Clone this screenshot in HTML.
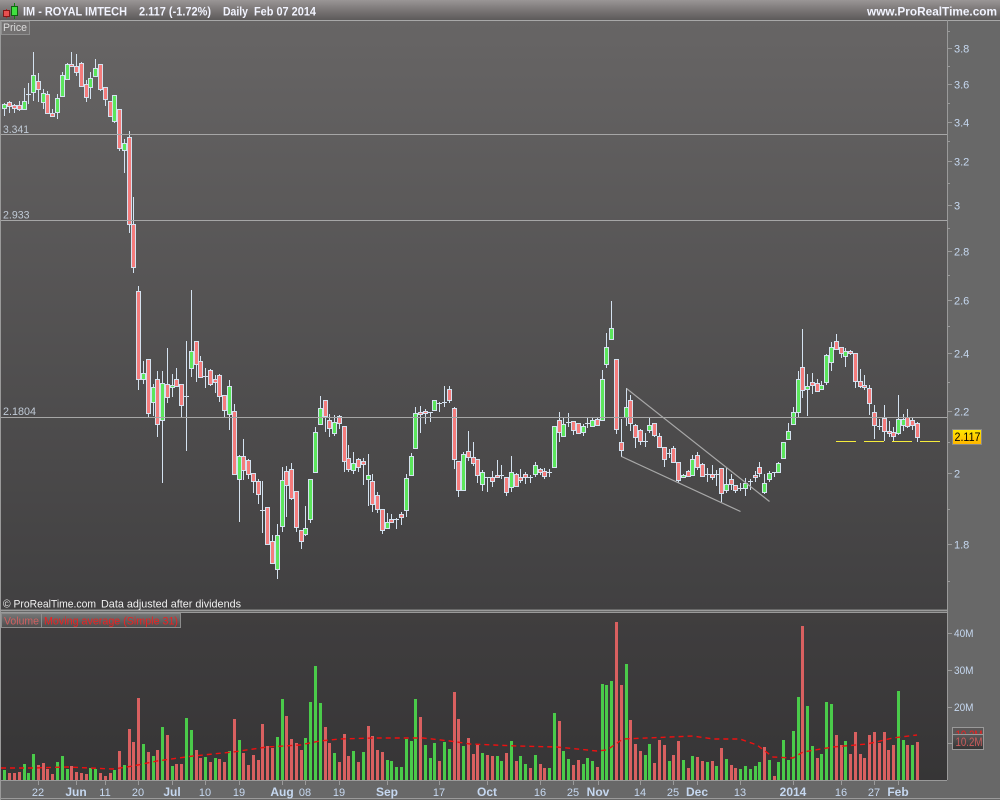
<!DOCTYPE html>
<html><head><meta charset="utf-8"><title>IM - ROYAL IMTECH</title>
<style>
html,body{margin:0;padding:0;background:#686868;width:1000px;height:800px;overflow:hidden}
svg{display:block}
text{font-family:"Liberation Sans",Arial,sans-serif;font-size:11px}
</style></head><body>
<svg width="1000" height="800" viewBox="0 0 1000 800" xmlns="http://www.w3.org/2000/svg">
<defs>
<linearGradient id="hd" x1="0" y1="0" x2="0" y2="1"><stop offset="0" stop-color="#9a9696"/><stop offset=".5" stop-color="#7a7676"/><stop offset="1" stop-color="#5c5a5a"/></linearGradient>
<linearGradient id="pr" x1="0" y1="0" x2="0" y2="1"><stop offset="0" stop-color="#676565"/><stop offset="1" stop-color="#414041"/></linearGradient>
<linearGradient id="vo" x1="0" y1="0" x2="0" y2="1"><stop offset="0" stop-color="#403e3f"/><stop offset="1" stop-color="#363536"/></linearGradient>
<linearGradient id="tg" x1="0" y1="0" x2="0" y2="1"><stop offset="0" stop-color="#ffe800"/><stop offset="1" stop-color="#ffb400"/></linearGradient>
<linearGradient id="tb" x1="0" y1="0" x2="0" y2="1"><stop offset="0" stop-color="#777"/><stop offset="1" stop-color="#4c4c4c"/></linearGradient>
<linearGradient id="vb" x1="0" y1="0" x2="0" y2="1"><stop offset="0" stop-color="#5c5a5a"/><stop offset="1" stop-color="#333"/></linearGradient>
</defs>
<rect width="1000" height="800" fill="#686868"/>
<rect width="1000" height="20" fill="url(#hd)"/>
<rect x="0" y="20" width="1000" height="1" fill="#a8a8a8"/>
<rect x="1" y="21" width="946" height="588" fill="url(#pr)"/>
<rect x="1" y="613" width="946" height="167" fill="url(#vo)"/>
<g shape-rendering="crispEdges" fill="none" stroke="#9a9a9a">
<path d="M.5 20V800M947.5 20V780M0 610.5H947M0 612.5H947M0 780.5H947M0 798.5H1000"/>
</g>

<!-- header icon -->
<g shape-rendering="crispEdges">
<path d="M6.5 9V18" stroke="#c02020"/><rect x="3.5" y="10.5" width="6" height="6" fill="#e85050" stroke="#801818"/>
<path d="M14.5 3V19" stroke="#108010"/><rect x="11.5" y="6.5" width="6" height="9" fill="#40e040" stroke="#106010"/>
</g>
<g fill="#f2f4ff" font-weight="bold">
<text x="23" y="15.5" textLength="104" lengthAdjust="spacingAndGlyphs" style="font-size:11.5px">IM - ROYAL IMTECH</text>
<text x="139" y="15.5" textLength="72" lengthAdjust="spacingAndGlyphs" style="font-size:11.5px">2.117 (-1.72%)</text>
<text x="223" y="15.5" textLength="25" lengthAdjust="spacingAndGlyphs" style="font-size:11.5px">Daily</text>
<text x="254" y="15.5" textLength="62" lengthAdjust="spacingAndGlyphs" style="font-size:11.5px">Feb 07 2014</text>
<text x="867" y="15.5" textLength="130" lengthAdjust="spacingAndGlyphs" style="font-size:12px">www.ProRealTime.com</text>
</g>

<!-- price tab -->
<rect x="1.5" y="21.5" width="28" height="13" fill="#737171" stroke="#8e8e8e" shape-rendering="crispEdges"/>
<text x="3" y="31" fill="#dcdcdc" textLength="24" lengthAdjust="spacingAndGlyphs">Price</text>

<!-- wicks -->
<path shape-rendering="crispEdges" fill="none" stroke="#d4e2f0" d="M4.5 103V116M9.5 101V113M14.5 104V113M19.5 101V111M24.5 88V109M28.5 83V104M26 94.5H31M33.5 52V101M38.5 73V102M43.5 89V109M47.5 91V114M52.5 109V117M57.5 94V119M62.5 72V97M67.5 63V80M71.5 52V67M76.5 54V76M81.5 62V87M86.5 80V102M90.5 72V99M95.5 59V77M100.5 64V91M105.5 87V106M110.5 101V117M114.5 95V123M119.5 109V151M124.5 139V173M129.5 131V233M133.5 197V273M138.5 286V390M143.5 361V384M148.5 359V417M153.5 384V416M157.5 371V437M162.5 371V483M167.5 348V403M172.5 374V397M176.5 368V387M181.5 384V417M186.5 341V451M184 396.5H189M191.5 290V377M196.5 341V382M200.5 356V377M205.5 368V388M203 376.5H208M210.5 369V386M215.5 375V393M219.5 374V402M224.5 395V417M229.5 380V430M234.5 404V474M239.5 455V522M243.5 439V480M248.5 459V479M253.5 473V493M258.5 479V504M262.5 481V533M260 510.5H265M267.5 507V544M272.5 535V564M277.5 524V579M282.5 467V532M286.5 466V517M291.5 463V500M296.5 491V532M301.5 530V549M305.5 506V536M310.5 479V523M315.5 427V473M320.5 396V425M325.5 400V432M329.5 414V437M334.5 415V436M339.5 415V429M344.5 426V472M348.5 445V472M353.5 452V474M358.5 458V472M363.5 458V485M368.5 454V506M372.5 474V512M377.5 492V513M382.5 509V534M387.5 513V529M391.5 514V523M396.5 518V529M394 519.5H399M401.5 512V525M406.5 474V517M411.5 453V475M415.5 407V449M420.5 406V433M425.5 409V424M430.5 412V422M428 412.5H433M434.5 400V410M439.5 402V412M437 403.5H442M444.5 386V407M442 402.5H447M449.5 386V403M454.5 407V469M458.5 461V497M463.5 452V490M468.5 431V461M473.5 442V466M477.5 459V483M482.5 470V491M487.5 477V492M485 477.5H490M492.5 471V487M497.5 460V478M501.5 465V479M499 475.5H504M506.5 477V496M511.5 456V492M516.5 473V487M520.5 469V483M525.5 472V484M530.5 475V483M528 477.5H533M535.5 462V477M540.5 468V475M544.5 468V479M549.5 469V477M547 472.5H552M554.5 426V468M559.5 412V442M563.5 417V437M568.5 413V427M566 422.5H571M573.5 421V435M578.5 423V434M583.5 424V436M587.5 418V428M585 423.5H590M592.5 418V427M597.5 418V426M602.5 370V421M606.5 333V368M611.5 301V340M616.5 359V434M621.5 419V457M626.5 388V426M630.5 395V431M635.5 424V448M640.5 429V445M645.5 433V447M643 441.5H648M649.5 418V433M654.5 423V437M659.5 433V447M664.5 447V467M669.5 449V458M667 453.5H672M673.5 446V463M678.5 462V483M683.5 474V478M688.5 470V477M692.5 455V476M697.5 452V470M702.5 463V477M707.5 468V482M705 474.5H710M712.5 465V480M716.5 470V486M714 474.5H719M721.5 468V502M726.5 468V493M731.5 474V490M735.5 485V493M740.5 483V491M738 488.5H743M745.5 478V496M750.5 479V490M748 481.5H753M755.5 471V482M759.5 462V477M764.5 474V494M769.5 471V482M774.5 472V477M772 472.5H777M778.5 462V473M783.5 442V459M788.5 423V439M793.5 407V424M798.5 371V417M802.5 329V398M807.5 374V416M812.5 373V394M817.5 379V392M821.5 381V390M826.5 354V385M831.5 342V371M836.5 334V349M841.5 347V358M845.5 348V367M850.5 350V355M855.5 353V388M860.5 369V388M864.5 375V390M869.5 385V415M874.5 405V439M879.5 419V430M877 426.5H882M884.5 405V441M889.5 421V437M893.5 427V441M898.5 395V435M903.5 414V431M907.5 409V428M912.5 417V430M917.5 422V442"/>

<!-- green bodies -->
<path shape-rendering="crispEdges" fill="#5ce65c" stroke="#d4e2f0" d="M2.5 104.5h4v4h-4zM22.5 101.5h4v8h-4zM31.5 75.5h4v17h-4zM41.5 93.5h4v9h-4zM55.5 98.5h4v14h-4zM60.5 75.5h4v21h-4zM65.5 64.5h4v15h-4zM88.5 78.5h4v9h-4zM93.5 68.5h4v8h-4zM112.5 95.5h4v26h-4zM122.5 143.5h4v7h-4zM141.5 373.5h4v6h-4zM151.5 387.5h4v15h-4zM160.5 383.5h4v37h-4zM170.5 385.5h4v2h-4zM189.5 351.5h4v17h-4zM227.5 386.5h4v28h-4zM237.5 456.5h4v23h-4zM275.5 535.5h4v34h-4zM280.5 480.5h4v46h-4zM303.5 528.5h4v6h-4zM308.5 479.5h4v40h-4zM313.5 432.5h4v40h-4zM318.5 408.5h4v16h-4zM332.5 422.5h4v11h-4zM351.5 463.5h4v7h-4zM366.5 475.5h4v4h-4zM385.5 522.5h4v6h-4zM404.5 478.5h4v32h-4zM409.5 456.5h4v19h-4zM413.5 413.5h4v35h-4zM432.5 400.5h4v10h-4zM461.5 454.5h4v36h-4zM480.5 472.5h4v12h-4zM509.5 472.5h4v15h-4zM533.5 465.5h4v9h-4zM552.5 426.5h4v41h-4zM561.5 424.5h4v12h-4zM581.5 426.5h4v6h-4zM590.5 420.5h4v6h-4zM600.5 379.5h4v41h-4zM604.5 347.5h4v17h-4zM609.5 328.5h4v11h-4zM624.5 407.5h4v10h-4zM647.5 425.5h4v5h-4zM681.5 475.5h4v2h-4zM690.5 459.5h4v16h-4zM724.5 484.5h4v6h-4zM743.5 483.5h4v5h-4zM762.5 483.5h4v9h-4zM767.5 473.5h4v6h-4zM776.5 463.5h4v9h-4zM781.5 442.5h4v16h-4zM786.5 431.5h4v8h-4zM791.5 412.5h4v12h-4zM796.5 379.5h4v33h-4zM805.5 386.5h4v3h-4zM819.5 385.5h4v4h-4zM824.5 355.5h4v27h-4zM829.5 347.5h4v15h-4zM843.5 351.5h4v5h-4zM896.5 419.5h4v14h-4zM901.5 419.5h4v6h-4z"/>

<!-- red bodies -->
<path shape-rendering="crispEdges" fill="#f47c7c" stroke="#d4e2f0" d="M7.5 102.5h4v4h-4zM12.5 105.5h4v3h-4zM17.5 105.5h4v4h-4zM36.5 81.5h4v8h-4zM45.5 94.5h4v19h-4zM50.5 113.5h4v3h-4zM69.5 64.5h4v2h-4zM74.5 66.5h4v6h-4zM79.5 63.5h4v23h-4zM84.5 84.5h4v13h-4zM98.5 64.5h4v25h-4zM103.5 87.5h4v12h-4zM108.5 101.5h4v15h-4zM117.5 109.5h4v39h-4zM127.5 137.5h4v87h-4zM131.5 224.5h4v43h-4zM136.5 291.5h4v88h-4zM146.5 359.5h4v54h-4zM155.5 379.5h4v45h-4zM165.5 384.5h4v13h-4zM174.5 379.5h4v7h-4zM179.5 384.5h4v21h-4zM194.5 341.5h4v23h-4zM198.5 361.5h4v16h-4zM208.5 370.5h4v14h-4zM213.5 379.5h4v3h-4zM217.5 375.5h4v21h-4zM222.5 395.5h4v15h-4zM232.5 411.5h4v63h-4zM241.5 456.5h4v14h-4zM246.5 460.5h4v14h-4zM251.5 473.5h4v8h-4zM256.5 481.5h4v13h-4zM265.5 507.5h4v37h-4zM270.5 541.5h4v22h-4zM284.5 471.5h4v14h-4zM289.5 469.5h4v29h-4zM294.5 491.5h4v36h-4zM299.5 530.5h4v11h-4zM323.5 400.5h4v16h-4zM327.5 420.5h4v8h-4zM337.5 416.5h4v7h-4zM342.5 426.5h4v35h-4zM346.5 458.5h4v11h-4zM356.5 459.5h4v8h-4zM361.5 461.5h4v3h-4zM370.5 481.5h4v23h-4zM375.5 495.5h4v14h-4zM380.5 509.5h4v21h-4zM389.5 519.5h4v3h-4zM399.5 514.5h4v3h-4zM418.5 412.5h4v2h-4zM423.5 411.5h4v2h-4zM447.5 389.5h4v11h-4zM452.5 408.5h4v51h-4zM456.5 461.5h4v29h-4zM466.5 451.5h4v6h-4zM471.5 457.5h4v6h-4zM475.5 459.5h4v16h-4zM490.5 477.5h4v4h-4zM495.5 475.5h4v2h-4zM504.5 477.5h4v15h-4zM514.5 474.5h4v12h-4zM518.5 477.5h4v3h-4zM523.5 474.5h4v3h-4zM538.5 469.5h4v3h-4zM542.5 471.5h4v5h-4zM557.5 420.5h4v12h-4zM571.5 421.5h4v9h-4zM576.5 423.5h4v10h-4zM595.5 419.5h4v6h-4zM614.5 359.5h4v70h-4zM619.5 442.5h4v8h-4zM628.5 400.5h4v23h-4zM633.5 425.5h4v12h-4zM638.5 430.5h4v11h-4zM652.5 423.5h4v12h-4zM657.5 436.5h4v11h-4zM662.5 447.5h4v12h-4zM671.5 448.5h4v14h-4zM676.5 462.5h4v18h-4zM686.5 471.5h4v5h-4zM695.5 455.5h4v12h-4zM700.5 464.5h4v12h-4zM710.5 474.5h4v3h-4zM719.5 468.5h4v25h-4zM729.5 479.5h4v5h-4zM733.5 485.5h4v5h-4zM753.5 475.5h4v2h-4zM757.5 467.5h4v6h-4zM800.5 367.5h4v23h-4zM810.5 382.5h4v3h-4zM815.5 383.5h4v8h-4zM834.5 341.5h4v8h-4zM839.5 347.5h4v6h-4zM848.5 351.5h4v2h-4zM853.5 353.5h4v28h-4zM858.5 381.5h4v5h-4zM862.5 385.5h4v2h-4zM867.5 388.5h4v15h-4zM872.5 412.5h4v13h-4zM882.5 418.5h4v13h-4zM887.5 431.5h4v2h-4zM891.5 432.5h4v4h-4zM905.5 417.5h4v9h-4zM910.5 420.5h4v5h-4zM915.5 423.5h4v14h-4z"/>

<!-- horizontal levels -->
<g shape-rendering="crispEdges" stroke="#a6a6a6"><path d="M1 134.5H947M1 220.5H947M1 417.5H947"/></g>
<g fill="#c0cad6"><text x="3" y="133" textLength="26" lengthAdjust="spacingAndGlyphs">3.341</text><text x="3" y="218.5" textLength="26.5" lengthAdjust="spacingAndGlyphs">2.933</text><text x="3" y="415" textLength="33" lengthAdjust="spacingAndGlyphs">2.1804</text></g>

<!-- wedge -->
<g stroke="#a8a8a8" stroke-width="1.2" fill="none"><path d="M626.5 388.5L769.5 501.5"/><path d="M621.5 456.5L740.5 511.5"/></g>
<!-- yellow supports -->
<path shape-rendering="crispEdges" stroke="#f6ec3c" d="M836 441.5H856M864 441.5H884M892 441.5H912M920 441.5H940"/>

<text x="3" y="607.5" fill="#f0f0f0" textLength="93" lengthAdjust="spacingAndGlyphs">© ProRealTime.com</text>
<text x="101" y="607.5" fill="#f0f0f0" textLength="140" lengthAdjust="spacingAndGlyphs">Data adjusted after dividends</text>

<!-- y axis -->
<path shape-rendering="crispEdges" stroke="#9a9a9a" d="M948 48.5H952M948 84.5H952M948 122.5H952M948 161.5H952M948 205.5H952M948 251.5H952M948 300.5H952M948 353.5H952M948 411.5H952M948 473.5H952M948 544.5H952M948 31.5H950M948 66.5H950M948 103.5H950M948 141.5H950M948 183.5H950M948 228.5H950M948 275.5H950M948 326.5H950M948 382.5H950M948 442.5H950M948 509.5H950M948 581.5H950M948 633.5H952M948 670.5H952M948 707.5H952M948 743.5H952"/>
<g fill="#c6d8f0">
<text x="954" y="52.5">3.8</text><text x="954" y="88.5">3.6</text><text x="954" y="126.5">3.4</text><text x="954" y="165.5">3.2</text><text x="954" y="209.5">3</text><text x="954" y="255.5">2.8</text><text x="954" y="304.5">2.6</text><text x="954" y="357.5">2.4</text><text x="954" y="415.5">2.2</text><text x="954" y="477.5">2</text><text x="954" y="548.5">1.8</text>
<text x="954" y="637" textLength="19.5" lengthAdjust="spacingAndGlyphs">40M</text><text x="954" y="674" textLength="19.5" lengthAdjust="spacingAndGlyphs">30M</text><text x="954" y="711" textLength="19.5" lengthAdjust="spacingAndGlyphs">20M</text>
</g>
<rect x="952.5" y="429.5" width="29" height="15" fill="url(#tg)" stroke="#888" shape-rendering="crispEdges"/>
<text x="954.5" y="441" fill="#000" textLength="26" lengthAdjust="spacingAndGlyphs" style="font-size:12px">2.117</text>

<!-- volume tabs -->
<g shape-rendering="crispEdges" stroke="#8c8c8c"><rect x="1.5" y="613.5" width="40" height="14" fill="url(#tb)"/><rect x="41.5" y="613.5" width="139" height="14" fill="url(#tb)"/></g>
<text x="4" y="624.5" fill="#d06060" textLength="35" lengthAdjust="spacingAndGlyphs">Volume</text>
<text x="44" y="624.5" fill="#ee2020" textLength="134" lengthAdjust="spacingAndGlyphs">Moving average (Simple 31)</text>

<!-- volume bars green -->
<path shape-rendering="crispEdges" fill="none" stroke="#4acb4a" stroke-width="3" d="M4.5 780v-10M24.5 780v-16M28.5 780v-7M33.5 780v-26M57.5 780v-18M62.5 780v-24M67.5 780v-11M90.5 780v-12M95.5 780v-11M114.5 780v-10M124.5 780v-15M143.5 780v-36M153.5 780v-24M162.5 780v-53M172.5 780v-14M186.5 780v-62M191.5 780v-50M205.5 780v-23M215.5 780v-22M229.5 780v-29M239.5 780v-40M277.5 780v-43M282.5 780v-81M305.5 780v-42M310.5 780v-78M315.5 780v-114M320.5 780v-77M334.5 780v-27M353.5 780v-29M363.5 780v-28M387.5 780v-20M391.5 780v-19M396.5 780v-13M401.5 780v-13M406.5 780v-41M411.5 780v-39M415.5 780v-81M425.5 780v-35M430.5 780v-22M434.5 780v-37M444.5 780v-38M449.5 780v-31M463.5 780v-34M482.5 780v-27M497.5 780v-24M501.5 780v-19M511.5 780v-39M520.5 780v-24M525.5 780v-16M535.5 780v-25M549.5 780v-12M554.5 780v-67M563.5 780v-29M568.5 780v-21M583.5 780v-16M587.5 780v-22M592.5 780v-19M602.5 780v-96M606.5 780v-95M611.5 780v-99M626.5 780v-116M645.5 780v-25M649.5 780v-36M669.5 780v-19M683.5 780v-20M692.5 780v-24M707.5 780v-18M716.5 780v-14M726.5 780v-21M740.5 780v-11M745.5 780v-14M750.5 780v-11M755.5 780v-14M759.5 780v-18M769.5 780v-20M778.5 780v-18M783.5 780v-40M788.5 780v-20M793.5 780v-49M798.5 780v-83M807.5 780v-74M812.5 780v-34M821.5 780v-26M826.5 780v-78M831.5 780v-76M845.5 780v-39M898.5 780v-89M903.5 780v-40M912.5 780v-35"/>
<!-- volume bars red -->
<path shape-rendering="crispEdges" fill="none" stroke="#d96060" stroke-width="3" d="M9.5 780v-7M14.5 780v-7M19.5 780v-8M38.5 780v-15M43.5 780v-17M47.5 780v-11M52.5 780v-6M71.5 780v-14M76.5 780v-8M81.5 780v-7M86.5 780v-6M100.5 780v-7M105.5 780v-4M110.5 780v-7M119.5 780v-29M129.5 780v-51M133.5 780v-38M138.5 780v-82M148.5 780v-28M157.5 780v-30M167.5 780v-45M176.5 780v-16M181.5 780v-16M196.5 780v-30M200.5 780v-22M210.5 780v-18M219.5 780v-21M224.5 780v-18M234.5 780v-61M243.5 780v-27M248.5 780v-15M253.5 780v-25M258.5 780v-20M262.5 780v-56M267.5 780v-34M272.5 780v-32M286.5 780v-64M291.5 780v-41M296.5 780v-37M301.5 780v-30M325.5 780v-53M329.5 780v-37M339.5 780v-18M344.5 780v-46M348.5 780v-24M358.5 780v-18M368.5 780v-54M372.5 780v-44M377.5 780v-30M382.5 780v-28M420.5 780v-63M439.5 780v-19M454.5 780v-88M458.5 780v-61M468.5 780v-42M473.5 780v-26M477.5 780v-35M487.5 780v-25M492.5 780v-24M506.5 780v-27M516.5 780v-19M530.5 780v-12M540.5 780v-16M544.5 780v-12M559.5 780v-59M573.5 780v-15M578.5 780v-20M597.5 780v-13M616.5 780v-158M621.5 780v-95M630.5 780v-60M635.5 780v-36M640.5 780v-29M654.5 780v-17M659.5 780v-40M664.5 780v-35M673.5 780v-25M678.5 780v-39M688.5 780v-12M697.5 780v-23M702.5 780v-19M712.5 780v-19M721.5 780v-32M731.5 780v-15M735.5 780v-12M764.5 780v-33M774.5 780v-4M802.5 780v-154M817.5 780v-22M836.5 780v-45M841.5 780v-35M850.5 780v-26M855.5 780v-48M860.5 780v-26M864.5 780v-22M869.5 780v-45M874.5 780v-48M879.5 780v-37M884.5 780v-48M888.5 780v-30M893.5 780v-35M907.5 780v-35M917.5 780v-38"/>
<!-- moving average -->
<polyline fill="none" stroke="#ee1010" stroke-width="1.4" stroke-dasharray="5 4" points="1,768 33,768 67,767 113,769 133,766 157,761 193,756 233,752 267,747 300,745 320,741 340,739 373,738 423,738 450,741 470,744 517,746 557,747 597,751 607,750 623,739 670,737 693,736 713,739 740,739 757,745 773,757 793,758 803,752 833,747 867,744 893,738 917,735"/>

<!-- volume value boxes -->
<rect x="952.5" y="727.5" width="31" height="9" fill="#5a5858" stroke="#9a9a9a" shape-rendering="crispEdges"/>
<svg x="953" y="728" width="30" height="7" viewBox="953 728 30 7"><text x="955.5" y="739" fill="#ee2020" textLength="27" lengthAdjust="spacingAndGlyphs" style="font-size:12px">10.2M</text></svg>
<rect x="952.5" y="734.5" width="31" height="15" fill="url(#vb)" stroke="#9a9a9a" shape-rendering="crispEdges"/>
<text x="955.5" y="746" fill="#cc5c5c" textLength="27" lengthAdjust="spacingAndGlyphs" style="font-size:12px">10.2M</text>

<!-- x axis -->
<path shape-rendering="crispEdges" stroke="#9a9a9a" d="M38.5 781v4M76.5 781v4M105.5 781v4M138.5 781v4M172.5 781v4M205.5 781v4M239.5 781v4M282.5 781v4M305.5 781v4M339.5 781v4M387.5 781v4M439.5 781v4M487.5 781v4M540.5 781v4M573.5 781v4M598.5 781v4M640.5 781v4M673.5 781v4M697.5 781v4M740.5 781v4M793.5 781v4M841.5 781v4M874.5 781v4M898.5 781v4"/>
<g fill="#c6d8f0" text-anchor="middle">
<text x="38" y="796">22</text><text x="105" y="796">11</text><text x="138" y="796">20</text><text x="205" y="796">10</text><text x="239" y="796">19</text><text x="305" y="796">08</text><text x="339" y="796">19</text><text x="439" y="796">17</text><text x="540" y="796">16</text><text x="573" y="796">25</text><text x="640" y="796">14</text><text x="673" y="796">25</text><text x="740" y="796">13</text><text x="841" y="796">16</text><text x="874" y="796">27</text>
<g font-weight="bold" style="font-size:12px"><text x="76" y="796" style="font-size:12px">Jun</text><text x="172" y="796" style="font-size:12px">Jul</text><text x="282" y="796" style="font-size:12px">Aug</text><text x="387" y="796" style="font-size:12px">Sep</text><text x="487" y="796" style="font-size:12px">Oct</text><text x="598" y="796" style="font-size:12px">Nov</text><text x="697" y="796" style="font-size:12px">Dec</text><text x="793" y="796" style="font-size:12px">2014</text><text x="898" y="796" style="font-size:12px">Feb</text></g>
</g>
</svg>
</body></html>
